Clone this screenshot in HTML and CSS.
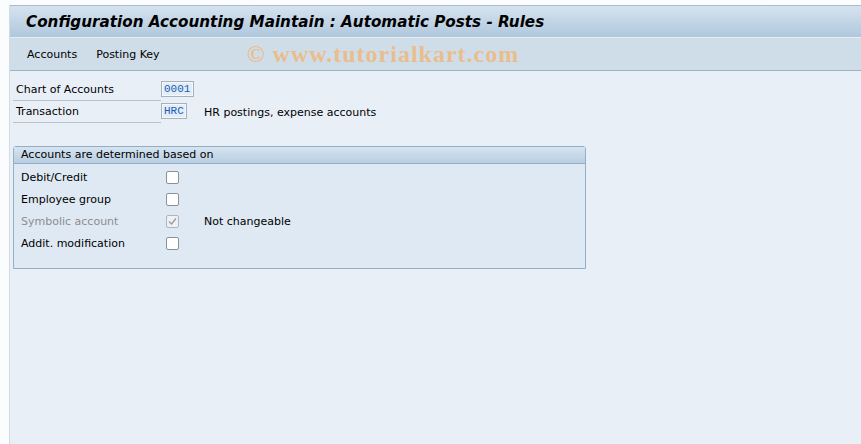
FILE: index.html
```html
<!DOCTYPE html>
<html lang="en">
<head>
    <meta charset="UTF-8">
    <title>Configuration Accounting Maintain : Automatic Posts - Rules</title>
    <link rel="stylesheet" href="styles.css">
</head>
<body>
    <div class="side"></div>
    <div class="screen">
        <div class="title-bar">
            <h1>Configuration Accounting Maintain : Automatic Posts - Rules</h1>
        </div>
        <div class="menu-bar">
            <span class="menu-item">Accounts</span>
            <span class="menu-item">Posting Key</span>
            <span class="watermark">&copy; www.tutorialkart.com</span>
        </div>
        <div class="content">
            <div class="field-row">
                <label class="field-label">Chart of Accounts</label>
                <span class="input wide">0001</span>
            </div>
            <div class="field-row">
                <label class="field-label">Transaction</label>
                <span class="input">HRC</span>
                <span class="field-text">HR postings, expense accounts</span>
            </div>

            <div class="group-box">
                <div class="group-title">Accounts are determined based on</div>
                <div class="group-body">
                    <div class="check-row">
                        <span class="check-label">Debit/Credit</span>
                        <span class="checkbox"></span>
                    </div>
                    <div class="check-row">
                        <span class="check-label">Employee group</span>
                        <span class="checkbox"></span>
                    </div>
                    <div class="check-row disabled">
                        <span class="check-label">Symbolic account</span>
                        <span class="checkbox checked">
                            <svg width="11" height="11" viewBox="0 0 11 11"><path d="M2 5.5 L4.5 8 L9 2.5" fill="none" stroke="#9a9a9a" stroke-width="1.3"/></svg>
                        </span>
                        <span class="check-note">Not changeable</span>
                    </div>
                    <div class="check-row">
                        <span class="check-label">Addit. modification</span>
                        <span class="checkbox"></span>
                    </div>
                </div>
            </div>
        </div>
    </div>
</body>
</html>
```

FILE: styles.css
```css
body {
    margin: 0;
    height: 444px;
    display: flex;
    background-color: #fbfcfd;
    font-family: "DejaVu Sans", sans-serif;
    font-size: 11px;
    color: #000;
    overflow: hidden;
}
.side {
    width: 9px;
    flex: none;
}
.screen {
    flex: 1;
    display: flex;
    flex-direction: column;
    margin-top: 5px;
    border-left: 1px solid #d2dae3;
    background-color: #e9eff7;
}
.title-bar {
    height: 31px;
    border-top: 1px solid #a9bccf;
    background: linear-gradient(#d5e3ef, #b0c7dd);
    display: flex;
    align-items: center;
    padding-left: 16px;
}
.title-bar h1 {
    margin: 0;
    font-size: 15.2px;
    font-weight: bold;
    font-style: italic;
}
.menu-bar {
    height: 32px;
    border-top: 1px solid #e4edf5;
    border-bottom: 1px solid #9fb3c8;
    background-color: #cfdde8;
    display: flex;
    align-items: center;
    padding-left: 17px;
    gap: 19px;
}
.menu-item {
    font-size: 11px;
}
.watermark {
    margin-left: 68px;
    font-family: "Liberation Serif", serif;
    font-weight: bold;
    font-size: 24px;
    letter-spacing: 1px;
    color: #eabd8e;
}
.content {
    padding: 8px 0 0 3px;
}
.field-row {
    display: flex;
    align-items: center;
    height: 22px;
}
.field-label {
    width: 145px;
    height: 20px;
    line-height: 20px;
    padding-left: 3px;
    border-bottom: 1px solid #b8c3cc;
}
.input {
    width: 22px;
    height: 13px;
    line-height: 13px;
    margin-top: -3px;
    border: 1px solid #a8b0b8;
    box-shadow: inset 0 0 0 1px #f4f8fc;
    background-color: #e3edf9;
    font-family: "Liberation Mono", monospace;
    font-size: 11px;
    color: #1a5cb0;
    padding: 1px 0 0 2px;
}
.input.wide {
    width: 29px;
}
.field-text {
    margin-left: 17px;
}
.group-box {
    width: 571px;
    margin-top: 23px;
    border: 1px solid #94aec8;
    border-radius: 3px 3px 0 0;
    background-color: #dfe9f3;
}
.group-title {
    height: 16px;
    line-height: 16px;
    padding-left: 7px;
    background: linear-gradient(#d6e4f0, #b8cee2);
    border-bottom: 1px solid #94aec8;
}
.group-body {
    padding: 2px 0 14px 7px;
}
.check-row {
    display: flex;
    align-items: center;
    height: 22px;
}
.check-label {
    width: 145px;
}
.checkbox {
    width: 11px;
    height: 11px;
    border: 1px solid #8a9199;
    border-radius: 2px;
    background-color: #fff;
    display: flex;
    align-items: center;
    justify-content: center;
}
.checkbox.checked {
    background-color: #eef2f6;
    border-color: #b0b5ba;
}
.disabled .check-label {
    color: #8d8d8d;
}
.check-note {
    margin-left: 25px;
}
```
